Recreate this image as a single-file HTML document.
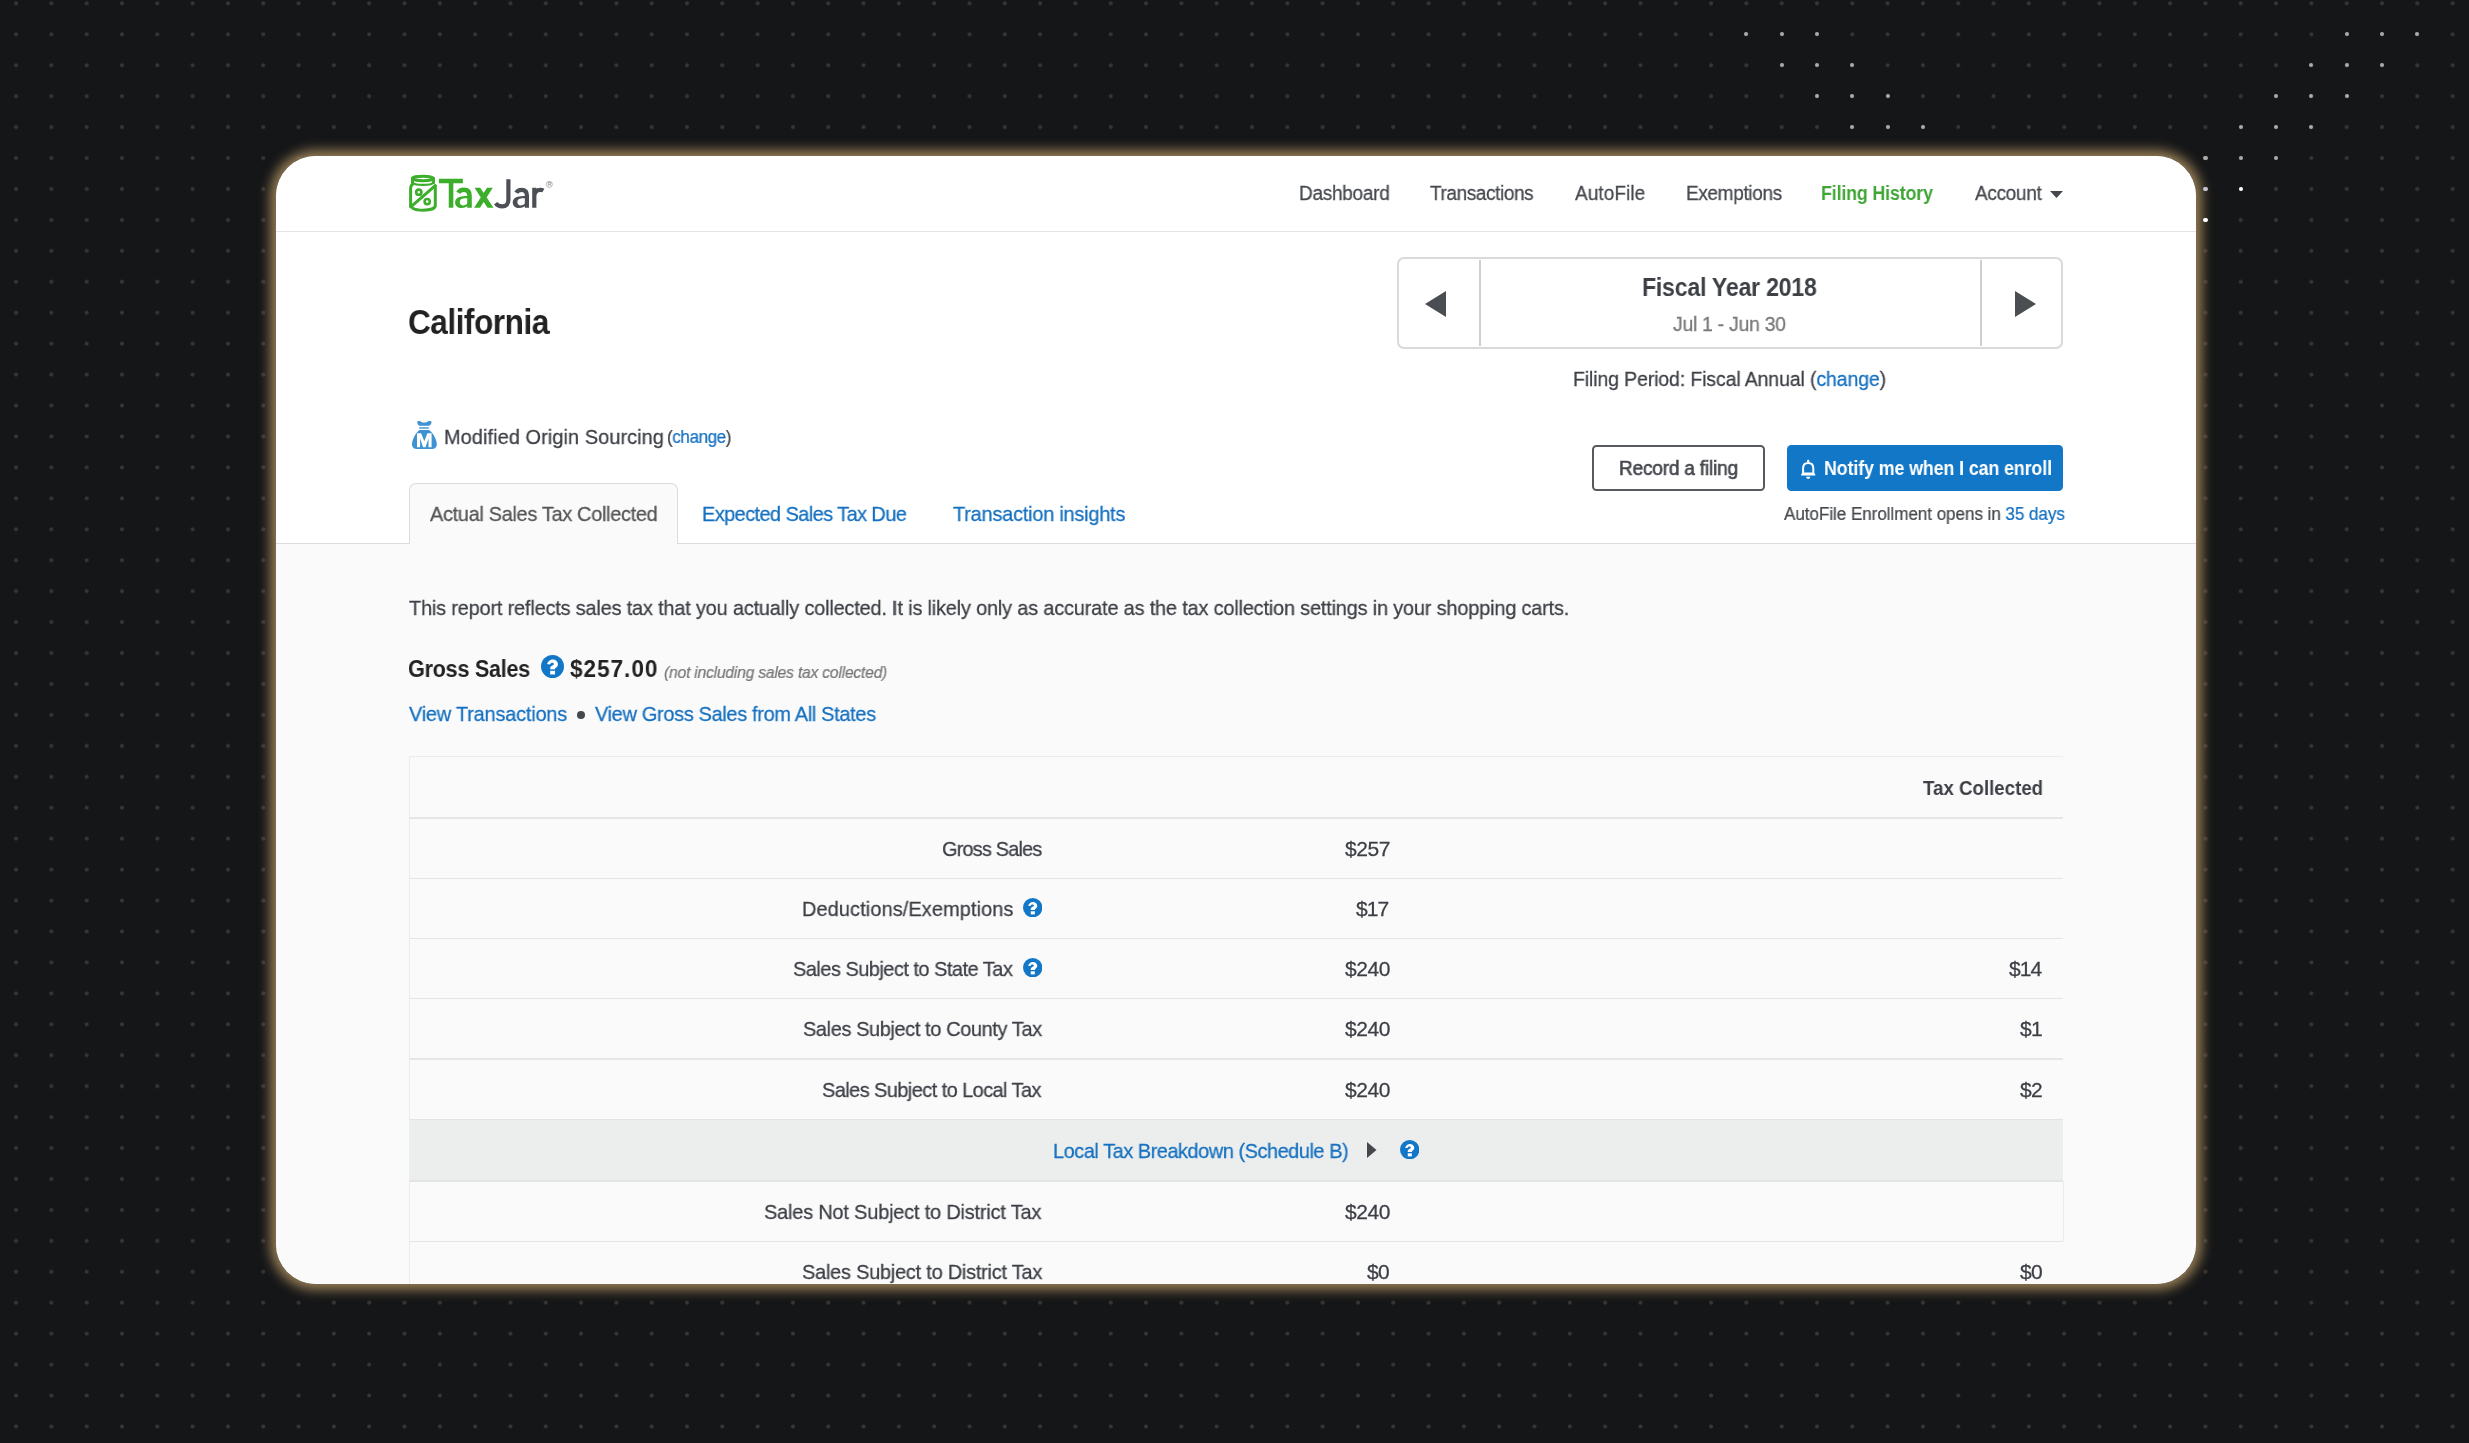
<!DOCTYPE html>
<html lang="en">
<head>
<meta charset="utf-8">
<title>TaxJar - California Sales Tax Report</title>
<style>
html,body{margin:0;padding:0}
body{width:2469px;height:1443px;overflow:hidden;position:relative;background-color:#151618;
 background-image:radial-gradient(circle at center,#383532 0,#383532 1.6px,rgba(56,53,50,0) 2.4px);
 background-size:35.3125px 30.9375px;background-position:-1.61px -12.14px;
 font-family:"Liberation Sans",sans-serif;}
.stars i{position:absolute;border-radius:50%;display:block}
.card{position:absolute;left:276px;top:156px;width:1920px;height:1128px;border-radius:40px;overflow:hidden;background:#fff;}
.glow{position:absolute;left:276px;top:156px;width:1920px;height:1128px;border-radius:40px;box-shadow:0 0 12px 6px rgb(148,124,85);}
.card a{color:#1570c0;text-decoration:none}
.t{position:absolute;white-space:nowrap;margin:0;padding:0;font-weight:400;transform-origin:0 0;will-change:transform}
header{position:absolute;left:0;top:0;width:1920px;height:75px;border-bottom:1px solid #e4e4e4;background:#fff}
.content{position:absolute;left:0;top:387px;width:1920px;height:741px;background:#fafafa;border-top:1px solid #dcdcdc}
.tabs .active{position:absolute;left:133px;top:327px;width:267px;height:60px;border:1px solid #dcdcdc;border-bottom:none;border-radius:7px 7px 0 0;background:#fafafa}
.period{position:absolute;left:1121px;top:101px;width:662px;height:88px;border:2px solid #d9d9d9;border-radius:7px;background:#fff}
.period .div{position:absolute;top:1px;bottom:1px;width:1.5px;background:#cfcfcf}
.btn{position:absolute;box-sizing:border-box;top:289.1px;height:45.7px;border-radius:4.5px}
#b1{left:1316.2px;width:173.0px;border:2px solid #56595f;background:#fff}
#b2{left:1510.8px;width:276.2px;background:#1377c8}
.ln{position:absolute;left:133px;width:1654px;height:1px;background:#e4e4e4}
.q,.ic{position:absolute}
#nav1{left:1023.0px;top:26.6px;font-size:20px;line-height:20px;letter-spacing:-0.289px;color:#45484d;transform:scaleX(0.95);-webkit-text-stroke-width:0.26px;}
#nav2{left:1154.1px;top:26.6px;font-size:20px;line-height:20px;letter-spacing:-0.421px;color:#45484d;transform:scaleX(0.95);-webkit-text-stroke-width:0.26px;}
#nav3{left:1298.9px;top:26.6px;font-size:20px;line-height:20px;letter-spacing:0.068px;color:#45484d;transform:scaleX(0.95);-webkit-text-stroke-width:0.26px;}
#nav4{left:1409.8px;top:26.6px;font-size:20px;line-height:20px;letter-spacing:-0.368px;color:#45484d;transform:scaleX(0.95);-webkit-text-stroke-width:0.26px;}
#nav5{left:1545.4px;top:26.6px;font-size:20px;line-height:20px;letter-spacing:-0.15px;color:#3fa535;transform:scaleX(0.89);font-weight:700;}
#nav6{left:1698.8px;top:26.6px;font-size:20px;line-height:20px;letter-spacing:-0.342px;color:#45484d;transform:scaleX(0.95);-webkit-text-stroke-width:0.26px;}
#h1{left:132.3px;top:148.5px;font-size:35.5px;line-height:35.5px;letter-spacing:-0.558px;color:#222;transform:scaleX(0.89);font-weight:700;}
#fyt{left:1366.2px;top:118.0px;font-size:26px;line-height:26px;letter-spacing:-0.27px;color:#3d4045;transform:scaleX(0.89);font-weight:700;}
#fyr{left:1397.4px;top:157.8px;font-size:20.5px;line-height:20.5px;letter-spacing:-0.32px;color:#777;transform:scaleX(0.95);-webkit-text-stroke-width:0.27px;}
#fp{left:1297.2px;top:213.2px;font-size:20.5px;line-height:20.5px;letter-spacing:-0.12px;color:#3c3f45;transform:scaleX(0.95);-webkit-text-stroke-width:0.27px;}
#src{left:168.2px;top:269.5px;font-size:21px;line-height:21px;letter-spacing:0.069px;color:#3c3f45;transform:scaleX(0.95);-webkit-text-stroke-width:0.27px;}
#srcc{left:390.8px;top:272.1px;font-size:18px;line-height:18px;letter-spacing:-0.459px;color:#3c3f45;transform:scaleX(0.95);-webkit-text-stroke-width:0.23px;}
#tab1{left:153.9px;top:346.9px;font-size:21px;line-height:21px;letter-spacing:-0.343px;color:#555;transform:scaleX(0.95);-webkit-text-stroke-width:0.27px;}
#tab2{left:426.0px;top:346.9px;font-size:21px;line-height:21px;letter-spacing:-0.609px;color:#1570c0;transform:scaleX(0.95);-webkit-text-stroke-width:0.27px;}
#tab3{left:677.2px;top:346.9px;font-size:21px;line-height:21px;letter-spacing:-0.238px;color:#1570c0;transform:scaleX(0.95);-webkit-text-stroke-width:0.27px;}
#brec{left:1343.3px;top:301.9px;font-size:20px;line-height:20px;letter-spacing:-0.18px;color:#45484d;transform:scaleX(0.95);-webkit-text-stroke-width:0.6px;}
#bnot{left:1547.5px;top:301.9px;font-size:20px;line-height:20px;letter-spacing:-0.105px;color:#fff;transform:scaleX(0.89);font-weight:700;}
#enr{left:1508.3px;top:349.0px;font-size:18px;line-height:18px;letter-spacing:-0.072px;color:#45484d;transform:scaleX(0.95);-webkit-text-stroke-width:0.23px;}
#intro{left:132.9px;top:440.9px;font-size:21px;line-height:21px;letter-spacing:-0.201px;color:#3c3f45;transform:scaleX(0.95);-webkit-text-stroke-width:0.27px;}
#gsl{left:132.2px;top:502.0px;font-size:23.5px;line-height:23.5px;letter-spacing:-0.302px;color:#222;transform:scaleX(0.92);font-weight:700;}
#gsa{left:294.1px;top:502.0px;font-size:23.5px;line-height:23.5px;letter-spacing:1.024px;color:#222;transform:scaleX(0.96);font-weight:700;}
#gsn{left:388.1px;top:507.5px;font-size:16.5px;line-height:16.5px;letter-spacing:-0.234px;color:#777;transform:scaleX(0.95);-webkit-text-stroke-width:0.21px;font-style:italic;}
#lk1{left:133.4px;top:547.0px;font-size:21px;line-height:21px;letter-spacing:-0.217px;color:#1570c0;transform:scaleX(0.95);-webkit-text-stroke-width:0.27px;}
#lk2{left:319.1px;top:547.0px;font-size:21px;line-height:21px;letter-spacing:-0.343px;color:#1570c0;transform:scaleX(0.95);-webkit-text-stroke-width:0.27px;}
#th{left:1647.0px;top:621.2px;font-size:21px;line-height:21px;letter-spacing:-0.006px;color:#3d4045;transform:scaleX(0.89);font-weight:700;}
#r1l{left:666.0px;top:681.9px;font-size:21px;line-height:21px;letter-spacing:-0.879px;color:#3c3f45;transform:scaleX(0.95);-webkit-text-stroke-width:0.27px;}
#r1a{left:1068.8px;top:681.9px;font-size:21px;line-height:21px;letter-spacing:-0.4px;color:#3c3f45;-webkit-text-stroke-width:0.27px;}
#r2l{left:525.8px;top:741.8px;font-size:21px;line-height:21px;letter-spacing:0.097px;color:#3c3f45;transform:scaleX(0.95);-webkit-text-stroke-width:0.27px;}
#r2a{left:1080.4px;top:741.8px;font-size:21px;line-height:21px;letter-spacing:-0.9px;color:#3c3f45;-webkit-text-stroke-width:0.27px;}
#r3l{left:516.5px;top:801.8px;font-size:21px;line-height:21px;letter-spacing:-0.531px;color:#3c3f45;transform:scaleX(0.95);-webkit-text-stroke-width:0.27px;}
#r3a{left:1068.8px;top:801.8px;font-size:21px;line-height:21px;letter-spacing:-0.4px;color:#3c3f45;-webkit-text-stroke-width:0.27px;}
#r3t{left:1733.0px;top:801.8px;font-size:21px;line-height:21px;letter-spacing:-0.9px;color:#3c3f45;-webkit-text-stroke-width:0.27px;}
#r4l{left:527.1px;top:861.7px;font-size:21px;line-height:21px;letter-spacing:-0.407px;color:#3c3f45;transform:scaleX(0.95);-webkit-text-stroke-width:0.27px;}
#r4a{left:1068.8px;top:861.7px;font-size:21px;line-height:21px;letter-spacing:-0.4px;color:#3c3f45;-webkit-text-stroke-width:0.27px;}
#r4t{left:1744.0px;top:861.7px;font-size:21px;line-height:21px;letter-spacing:-0.8px;color:#3c3f45;-webkit-text-stroke-width:0.27px;}
#r5l{left:546.4px;top:923.2px;font-size:21px;line-height:21px;letter-spacing:-0.596px;color:#3c3f45;transform:scaleX(0.95);-webkit-text-stroke-width:0.27px;}
#r5a{left:1068.8px;top:923.2px;font-size:21px;line-height:21px;letter-spacing:-0.4px;color:#3c3f45;-webkit-text-stroke-width:0.27px;}
#r5t{left:1744.0px;top:923.2px;font-size:21px;line-height:21px;letter-spacing:-0.8px;color:#3c3f45;-webkit-text-stroke-width:0.27px;}
#r6l{left:777.0px;top:983.8px;font-size:21px;line-height:21px;letter-spacing:-0.494px;color:#1570c0;transform:scaleX(0.95);-webkit-text-stroke-width:0.27px;}
#r7l{left:488.0px;top:1044.5px;font-size:21px;line-height:21px;letter-spacing:-0.201px;color:#3c3f45;transform:scaleX(0.95);-webkit-text-stroke-width:0.27px;}
#r7a{left:1068.8px;top:1044.5px;font-size:21px;line-height:21px;letter-spacing:-0.4px;color:#3c3f45;-webkit-text-stroke-width:0.27px;}
#r8l{left:525.5px;top:1105.4px;font-size:21px;line-height:21px;letter-spacing:-0.246px;color:#3c3f45;transform:scaleX(0.95);-webkit-text-stroke-width:0.27px;}
#r8a{left:1091.4px;top:1105.4px;font-size:21px;line-height:21px;letter-spacing:-0.8px;color:#3c3f45;-webkit-text-stroke-width:0.27px;}
#r8t{left:1744.0px;top:1105.4px;font-size:21px;line-height:21px;letter-spacing:-0.8px;color:#3c3f45;-webkit-text-stroke-width:0.27px;}
</style>
</head>
<body>
<div class="glow"></div>
<div class="stars">
<i style="left:1744.26px;top:32.17px;width:4.2px;height:4.2px;background:#aaaaac"></i>
<i style="left:1779.58px;top:32.17px;width:4.2px;height:4.2px;background:#aaaaac"></i>
<i style="left:1814.89px;top:32.17px;width:4.2px;height:4.2px;background:#aaaaac"></i>
<i style="left:1779.58px;top:63.10px;width:4.2px;height:4.2px;background:#aaaaac"></i>
<i style="left:1814.89px;top:63.10px;width:4.2px;height:4.2px;background:#aaaaac"></i>
<i style="left:1850.20px;top:63.10px;width:4.2px;height:4.2px;background:#aaaaac"></i>
<i style="left:1814.89px;top:94.04px;width:4.2px;height:4.2px;background:#aaaaac"></i>
<i style="left:1850.20px;top:94.04px;width:4.2px;height:4.2px;background:#aaaaac"></i>
<i style="left:1885.51px;top:94.04px;width:4.2px;height:4.2px;background:#aaaaac"></i>
<i style="left:1850.20px;top:124.98px;width:4.2px;height:4.2px;background:#aaaaac"></i>
<i style="left:1885.51px;top:124.98px;width:4.2px;height:4.2px;background:#aaaaac"></i>
<i style="left:1920.83px;top:124.98px;width:4.2px;height:4.2px;background:#aaaaac"></i>
<i style="left:2344.58px;top:32.17px;width:4.2px;height:4.2px;background:#aaaaac"></i>
<i style="left:2379.89px;top:32.17px;width:4.2px;height:4.2px;background:#aaaaac"></i>
<i style="left:2415.20px;top:32.17px;width:4.2px;height:4.2px;background:#aaaaac"></i>
<i style="left:2309.26px;top:63.10px;width:4.2px;height:4.2px;background:#aaaaac"></i>
<i style="left:2344.58px;top:63.10px;width:4.2px;height:4.2px;background:#aaaaac"></i>
<i style="left:2379.89px;top:63.10px;width:4.2px;height:4.2px;background:#aaaaac"></i>
<i style="left:2273.95px;top:94.04px;width:4.2px;height:4.2px;background:#aaaaac"></i>
<i style="left:2309.26px;top:94.04px;width:4.2px;height:4.2px;background:#aaaaac"></i>
<i style="left:2344.58px;top:94.04px;width:4.2px;height:4.2px;background:#aaaaac"></i>
<i style="left:2238.64px;top:124.98px;width:4.2px;height:4.2px;background:#aaaaac"></i>
<i style="left:2273.95px;top:124.98px;width:4.2px;height:4.2px;background:#aaaaac"></i>
<i style="left:2309.26px;top:124.98px;width:4.2px;height:4.2px;background:#aaaaac"></i>
<i style="left:2203.33px;top:155.92px;width:4.2px;height:4.2px;background:#aaaaac"></i>
<i style="left:2238.64px;top:155.92px;width:4.2px;height:4.2px;background:#aaaaac"></i>
<i style="left:2273.95px;top:155.92px;width:4.2px;height:4.2px;background:#aaaaac"></i>
<i style="left:2203.33px;top:186.86px;width:4.2px;height:4.2px;background:#c4c4cc"></i>
<i style="left:2238.54px;top:186.76px;width:4.4px;height:4.4px;background:#fff"></i>
<i style="left:2203.23px;top:217.69px;width:4.4px;height:4.4px;background:#fff"></i>
</div>
<main class="card">
<header>
<svg class="ic" style="left:132px;top:17px" width="150" height="42" viewBox="0 0 150 42">
<g fill="none" stroke="#3dae2b" stroke-linecap="round" stroke-linejoin="round">
<ellipse cx="15" cy="5.450" rx="10.500" ry="2.300" stroke-width="3"/>
<path d="M4.500 5.500v4.300M25.500 5.500v4.300" stroke-width="3"/>
<path d="M4.500 9.700c1.500 1.500 5.500 2.200 10.500 2.200s9-.7 10.500-2.200" stroke-width="2.200"/>
<path d="M5 11c-1.600.9-2.400 2.500-2.400 4.500V33.500M27.300 13v19.500c0 3-5 4.700-12.300 4.700-4.500 0-8-.7-10.300-2" stroke-width="3"/>
<path d="M2.800 33.800L27.200 12.700" stroke-width="3"/>
<circle cx="10.800" cy="19.200" r="2.600" stroke-width="2.600"/>
<circle cx="19.200" cy="28.600" r="2.600" stroke-width="2.600"/>
</g>
<g fill="none" stroke="#3dae2b" stroke-width="4.600" stroke-linejoin="round">
<path d="M30.900 8H54.900M43.050 8V34.800"/>
<path d="M50.300 19.800C51.400 17.700 53.300 16.800 55.800 16.800c3.700 0 5.700 2.100 5.700 5.800V34.800"/>
</g>
<path d="M66.500 14.700h5.700L85.500 34.800h-6zM79 14.700h5.800L72 34.800h-5.900z" fill="#3dae2b"/>
<path transform="translate(0 0)" fill-rule="evenodd" d="M60 22.900C54 22.900 47.100 23.500 47.100 29.300c0 3.700 2.700 5.800 6.500 5.800 2.900 0 4.900-1.100 6.400-2.800zM60 25.300c-4.800 0-8.200.3-8.200 3.900 0 2 1.300 3.200 3.300 3.200 2.600 0 4.900-1.600 4.900-3.800z" fill="#3dae2b"/>
<path transform="translate(57.6 0)" fill-rule="evenodd" d="M60 22.900C54 22.900 47.100 23.500 47.100 29.300c0 3.700 2.700 5.800 6.500 5.800 2.900 0 4.900-1.100 6.400-2.800zM60 25.300c-4.800 0-8.200.3-8.200 3.900 0 2 1.300 3.200 3.300 3.200 2.600 0 4.900-1.600 4.900-3.800z" fill="#4d4f56"/>
<g fill="none" stroke="#4d4f56" stroke-width="4.200" stroke-linejoin="round">
<path d="M100.400 6.300V27c0 4-2.400 6.300-6.100 6.300-2.800 0-5-1-6.700-3.100"/>
<path d="M108.300 19.800c1.100-2.100 2.900-3 5.300-3 3.500 0 5.300 2.100 5.300 5.800V34.800"/>
<path d="M126.300 14.700V34.800M126.300 23.500c0-4.300 2.700-6.700 6-6.700 1.100 0 2.200.2 3.100.7"/>
</g>
<circle cx="141.300" cy="11.400" r="3.100" fill="none" stroke="#a8a8a8" stroke-width=".8"/>
<text x="139.700" y="13.200" font-family="Liberation Sans, sans-serif" font-size="5" font-weight="700" fill="#999">R</text>
</svg>
<nav>
<a class="t" id="nav1" href="#">Dashboard</a>
<a class="t" id="nav2" href="#">Transactions</a>
<a class="t" id="nav3" href="#">AutoFile</a>
<a class="t" id="nav4" href="#">Exemptions</a>
<a class="t" id="nav5" href="#">Filing History</a>
<a class="t" id="nav6" href="#">Account</a>
<svg class="ic" style="left:1773.5px;top:35px" width="13" height="7" viewBox="0 0 13 7"><path d="M0 0h13L6.500 7z" fill="#45484d"/></svg>
</nav>
</header>

<section class="top">
<h1 class="t" id="h1">California</h1>
<div class="period">
<div class="div" style="left:80px"></div>
<div class="div" style="left:581px"></div>
<svg class="ic" style="left:26px;top:32px" width="21" height="26" viewBox="0 0 21 26"><path d="M21 0v26L0 13z" fill="#4a4d52"/></svg>
<svg class="ic" style="left:615.5px;top:32px" width="21" height="26" viewBox="0 0 21 26"><path d="M0 0v26L21 13z" fill="#4a4d52"/></svg>
</div>
<h2 class="t" id="fyt">Fiscal Year 2018</h2>
<p class="t" id="fyr">Jul 1 - Jun 30</p>
<p class="t" id="fp">Filing Period: Fiscal Annual (<a href="#">change</a>)</p>

<svg class="ic" style="left:135px;top:264px" width="27" height="30" viewBox="0 0 27 30">
<path d="M6.200 1.700C6.800.5 9.500.5 11.500 2.500h3.600C17 .5 19.800.5 20.600 1.700c0 1.900-1.100 3.400-2.600 4.100H8.600C7.200 5.100 6 3.600 6.200 1.700z" fill="#3f93d2"/>
<rect x="8" y="6.900" width="10.200" height="2.100" rx="1" fill="#7ab5e0"/>
<path d="M8.500 10.100h9.600c3.900 2.900 7.700 9.400 7.700 14.400 0 3.100-2.300 4.500-5.800 4.500H6.600C3.100 29 1 27.600 1 24.500 1 19.500 4.600 13 8.500 10.100z" fill="#3f93d2"/>
<path d="M6 27.200V13.200h4.200l3.100 8 3.100-8h4.200v14h-3.100v-8.700l-3 8.700h-2.400l-3-8.700v8.700z" fill="#fff"/>
</svg>
<p class="t" id="src">Modified Origin Sourcing</p>
<p class="t" id="srcc">(<a href="#">change</a>)</p>

<div class="btn" id="b1"></div>
<a class="t" id="brec" href="#">Record a filing</a>
<div class="btn" id="b2"></div>
<svg class="ic" style="left:1524px;top:302.5px" width="17" height="21" viewBox="0 0 17 21"><circle cx="8.200" cy="1.900" r="1.200" fill="#fff"/><path d="M3.100 15.500V9.300c0-3.400 2.100-5.400 5.100-5.400s5.100 2 5.100 5.400v6.200" fill="none" stroke="#fff" stroke-width="2"/><path d="M1.700 15.900h13l-1.300-1.700H3z" fill="#fff" stroke="#fff" stroke-width="1.400" stroke-linejoin="round"/><path d="M6.100 17.800a2.100 2.100 0 0 0 4.200 0z" fill="#fff"/></svg>
<a class="t" id="bnot" href="#">Notify me when I can enroll</a>
<p class="t" id="enr">AutoFile Enrollment opens in <a href="#">35 days</a></p>
</section>

<section class="content"></section>
<nav class="tabs">
<div class="active"></div>
<span class="t" id="tab1">Actual Sales Tax Collected</span>
<a class="t" id="tab2" href="#">Expected Sales Tax Due</a>
<a class="t" id="tab3" href="#">Transaction insights</a>
</nav>

<section class="report">
<p class="t" id="intro">This report reflects sales tax that you actually collected. It is likely only as accurate as the tax collection settings in your shopping carts.</p>
<h3 class="t" id="gsl">Gross Sales</h3>
<svg class="q" style="left:265.0px;top:499.4px" width="23" height="23" viewBox="0 0 20 20"><circle cx="10" cy="10" r="10" fill="#1377c8"/><path d="M5.200 7.900C6.300 5.400 7.900 4 10.100 4c2.500 0 4.600 1.700 4.600 4 0 1.600-.8 2.400-1.900 3-.4.300-.5.500-.5 1v.3H8v-.7c0-1.400.9-2 1.900-2.500.9-.5 1.300-.7 1.300-1.300 0-.7-.7-1.100-1.400-1.100-.9 0-1.400.5-2.100 1.500z" fill="#fff"/><rect x="8" y="13.700" width="4.200" height="3.200" fill="#fff"/></svg>
<span class="t" id="gsa">$257.00</span>
<span class="t" id="gsn">(not including sales tax collected)</span>
<a class="t" id="lk1" href="#">View Transactions</a>
<span class="ic" style="left:301.29999999999995px;top:555.2px;width:7.800px;height:7.800px;border-radius:50%;background:#45484d"></span>
<a class="t" id="lk2" href="#">View Gross Sales from All States</a>

<div class="ic" style="left:133px;top:600px;width:1654px;height:528px;border-left:1px solid #ececec;box-sizing:border-box"></div>
<div class="ic" style="left:133px;top:964px;width:1654px;height:60px;background:#eceeee"></div>
<div class="ln" style="top:600px;background:#ececec"></div>
<div class="ln" style="top:660.5px;height:2px;background:#e6e6e6"></div>
<div class="ln" style="top:722px"></div>
<div class="ln" style="top:782px"></div>
<div class="ln" style="top:842px"></div>
<div class="ln" style="top:902px;height:2px;background:#e6e6e6"></div>
<div class="ln" style="top:963px;background:#e2e4e4"></div>
<div class="ln" style="top:1023.5px;height:2px;background:#e3e5e5"></div>
<div class="ic" style="left:1787px;top:1025px;width:1px;height:60px;background:#ebebeb"></div>
<div class="ln" style="top:1085px"></div>

<div class="table" role="table">
<div class="row head" role="row"><span class="t" id="th">Tax Collected</span></div>
<div class="row" role="row"><span class="t" id="r1l">Gross Sales</span><span class="t" id="r1a">$257</span></div>
<div class="row" role="row"><span class="t" id="r2l">Deductions/Exemptions</span><svg class="q" style="left:746.6px;top:742.0px" width="19.4" height="19.4" viewBox="0 0 20 20"><circle cx="10" cy="10" r="10" fill="#1377c8"/><path d="M5.200 7.900C6.300 5.400 7.900 4 10.100 4c2.500 0 4.600 1.700 4.600 4 0 1.600-.8 2.400-1.900 3-.4.300-.5.500-.5 1v.3H8v-.7c0-1.400.9-2 1.900-2.500.9-.5 1.300-.7 1.300-1.300 0-.7-.7-1.100-1.400-1.100-.9 0-1.400.5-2.100 1.500z" fill="#fff"/><rect x="8" y="13.700" width="4.200" height="3.200" fill="#fff"/></svg><span class="t" id="r2a">$17</span></div>
<div class="row" role="row"><span class="t" id="r3l">Sales Subject to State Tax</span><svg class="q" style="left:746.6px;top:802.1px" width="19.4" height="19.4" viewBox="0 0 20 20"><circle cx="10" cy="10" r="10" fill="#1377c8"/><path d="M5.200 7.900C6.300 5.400 7.900 4 10.100 4c2.500 0 4.600 1.700 4.600 4 0 1.600-.8 2.400-1.900 3-.4.300-.5.500-.5 1v.3H8v-.7c0-1.400.9-2 1.900-2.500.9-.5 1.300-.7 1.300-1.300 0-.7-.7-1.100-1.400-1.100-.9 0-1.400.5-2.100 1.500z" fill="#fff"/><rect x="8" y="13.700" width="4.200" height="3.200" fill="#fff"/></svg><span class="t" id="r3a">$240</span><span class="t" id="r3t">$14</span></div>
<div class="row" role="row"><span class="t" id="r4l">Sales Subject to County Tax</span><span class="t" id="r4a">$240</span><span class="t" id="r4t">$1</span></div>
<div class="row" role="row"><span class="t" id="r5l">Sales Subject to Local Tax</span><span class="t" id="r5a">$240</span><span class="t" id="r5t">$2</span></div>
<div class="row breakdown" role="row"><a class="t" id="r6l" href="#">Local Tax Breakdown (Schedule B)</a>
<svg class="ic" style="left:1091px;top:986px" width="10" height="16" viewBox="0 0 10 16"><path d="M0 0v16L9.500 8z" fill="#45484d"/></svg>
<svg class="q" style="left:1123.6px;top:984.0px" width="19.4" height="19.4" viewBox="0 0 20 20"><circle cx="10" cy="10" r="10" fill="#1377c8"/><path d="M5.200 7.900C6.300 5.400 7.900 4 10.100 4c2.500 0 4.600 1.700 4.600 4 0 1.600-.8 2.400-1.900 3-.4.300-.5.500-.5 1v.3H8v-.7c0-1.400.9-2 1.900-2.500.9-.5 1.300-.7 1.300-1.300 0-.7-.7-1.100-1.400-1.100-.9 0-1.400.5-2.100 1.500z" fill="#fff"/><rect x="8" y="13.700" width="4.200" height="3.200" fill="#fff"/></svg></div>
<div class="row" role="row"><span class="t" id="r7l">Sales Not Subject to District Tax</span><span class="t" id="r7a">$240</span></div>
<div class="row" role="row"><span class="t" id="r8l">Sales Subject to District Tax</span><span class="t" id="r8a">$0</span><span class="t" id="r8t">$0</span></div>
</div>
</section>
</main>
</body>
</html>
